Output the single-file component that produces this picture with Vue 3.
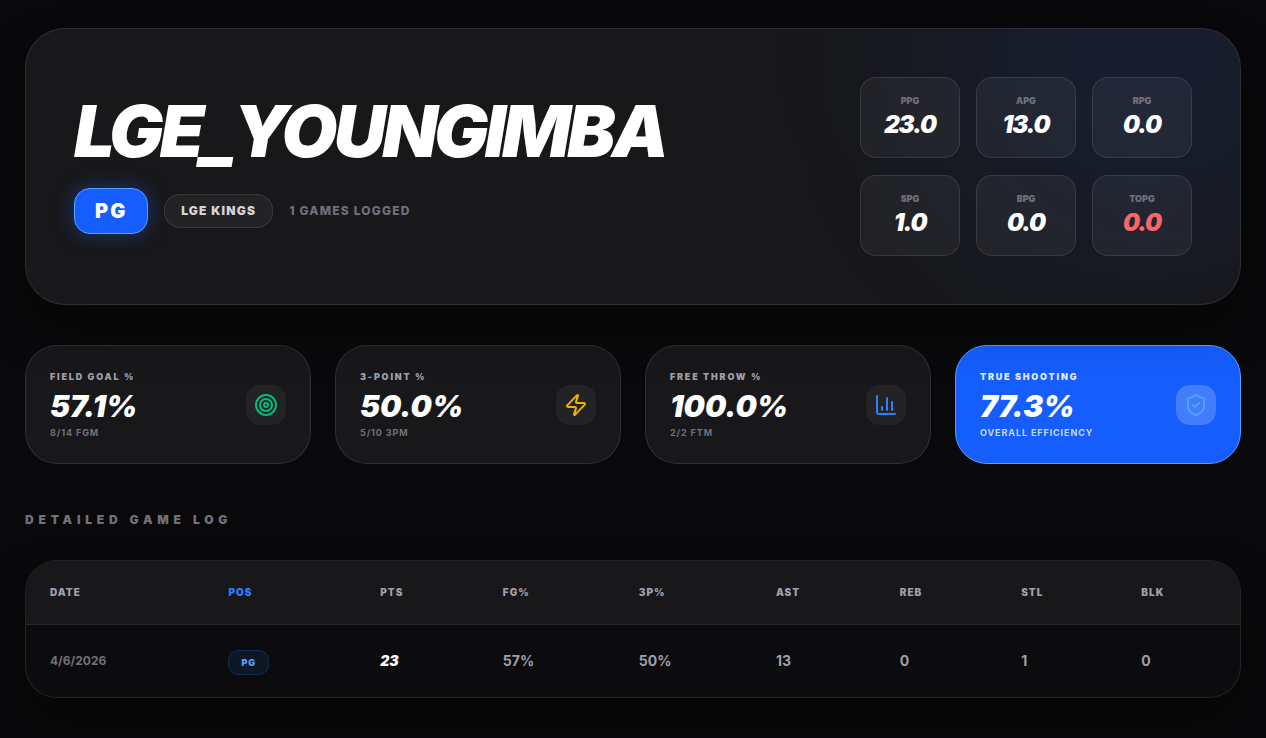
<script setup>
const averages = [
  { label: 'PPG', value: '23.0' },
  { label: 'APG', value: '13.0' },
  { label: 'RPG', value: '0.0' },
  { label: 'SPG', value: '1.0' },
  { label: 'BPG', value: '0.0' },
  { label: 'TOPG', value: '0.0', bad: true },
]

const shooting = [
  { label: 'Field Goal %', value: '57.1%', note: '8/14 FGM', icon: 'target' },
  { label: '3-Point %', value: '50.0%', note: '5/10 3PM', icon: 'zap' },
  { label: 'Free Throw %', value: '100.0%', note: '2/2 FTM', icon: 'chart' },
  { label: 'True Shooting', value: '77.3%', note: 'Overall Efficiency', icon: 'shield', featured: true },
]

const games = [
  { date: '4/6/2026', pos: 'PG', pts: 23, fg: '57%', tp: '50%', ast: 13, reb: 0, stl: 1, blk: 0 },
]
</script>

<template>
  <main class="page">
    <section class="hero">
      <div class="glow" aria-hidden="true"></div>
      <div class="identity">
        <h1>LGE_YOUNGIMBA</h1>
        <div class="tags">
          <span class="position">PG</span>
          <span class="team">LGE Kings</span>
          <span class="logged">1 Games Logged</span>
        </div>
      </div>
      <div class="averages">
        <div v-for="a in averages" :key="a.label" class="average">
          <div class="average-label">{{ a.label }}</div>
          <div class="average-value" :class="{ bad: a.bad }">{{ a.value }}</div>
        </div>
      </div>
    </section>

    <section class="shooting">
      <article v-for="s in shooting" :key="s.label" class="card" :class="{ featured: s.featured }">
        <div>
          <div class="card-label">{{ s.label }}</div>
          <div class="card-value">{{ s.value }}</div>
          <div class="card-note">{{ s.note }}</div>
        </div>
        <div class="icon" :class="s.icon">
          <svg viewBox="0 0 24 24" width="24" height="24" fill="none" stroke="currentColor" stroke-width="2" stroke-linecap="round" stroke-linejoin="round" aria-hidden="true">
            <template v-if="s.icon === 'target'">
              <circle cx="12" cy="12" r="10" />
              <circle cx="12" cy="12" r="6" />
              <circle cx="12" cy="12" r="2" />
            </template>
            <path v-else-if="s.icon === 'zap'" d="M4 14a1 1 0 0 1-.78-1.63l9.9-10.2a.5.5 0 0 1 .86.46l-1.92 6.02A1 1 0 0 0 13 10h7a1 1 0 0 1 .78 1.63l-9.9 10.2a.5.5 0 0 1-.86-.46l1.92-6.02A1 1 0 0 0 11 14z" />
            <template v-else-if="s.icon === 'chart'">
              <path d="M3 3v16a2 2 0 0 0 2 2h16" />
              <path d="M18 17V9" />
              <path d="M13 17V5" />
              <path d="M8 17v-3" />
            </template>
            <template v-else>
              <path d="M20 13c0 5-3.5 7.5-7.66 8.95a1 1 0 0 1-.67-.01C7.5 20.5 4 18 4 13V6a1 1 0 0 1 1-1c2 0 4.5-1.2 6.24-2.72a1.17 1.17 0 0 1 1.52 0C14.51 3.81 17 5 19 5a1 1 0 0 1 1 1z" />
              <path d="m9 12 2 2 4-4" />
            </template>
          </svg>
        </div>
      </article>
    </section>

    <section>
      <h2>Detailed Game Log</h2>
      <div class="log">
        <table>
          <thead>
            <tr>
              <th class="c-date">Date</th>
              <th class="c-pos">Pos</th>
              <th class="c-pts">Pts</th>
              <th class="c-fg">FG%</th>
              <th class="c-tp">3P%</th>
              <th class="c-ast">Ast</th>
              <th class="c-reb">Reb</th>
              <th class="c-stl">Stl</th>
              <th class="c-blk">Blk</th>
            </tr>
          </thead>
          <tbody>
            <tr v-for="g in games" :key="g.date">
              <td class="date">{{ g.date }}</td>
              <td><span class="chip">{{ g.pos }}</span></td>
              <td class="points">{{ g.pts }}</td>
              <td>{{ g.fg }}</td>
              <td>{{ g.tp }}</td>
              <td>{{ g.ast }}</td>
              <td>{{ g.reb }}</td>
              <td>{{ g.stl }}</td>
              <td>{{ g.blk }}</td>
            </tr>
          </tbody>
        </table>
      </div>
    </section>
  </main>
</template>

<style>
body {
  background: #09090b;
}
</style>

<style scoped>
.page {
  box-sizing: border-box;
  min-height: 100vh;
  padding: 28px 25px 40px;
  font-family: Inter, "Liberation Sans", sans-serif;
  color: #fff;
}

.hero {
  position: relative;
  display: flex;
  align-items: center;
  justify-content: space-between;
  gap: 48px;
  padding: 48px;
  border: 1px solid rgba(255, 255, 255, 0.1);
  border-radius: 40px;
  background: #18181b;
  box-shadow: 0 25px 50px -12px rgba(0, 0, 0, 0.5);
  overflow: hidden;
}

.glow {
  position: absolute;
  top: -176px;
  right: -96px;
  width: 384px;
  height: 384px;
  border-radius: 50%;
  background: rgba(21, 93, 252, 0.1);
  filter: blur(96px);
}

.identity,
.averages {
  position: relative;
}

h1 {
  margin: 0 0 26px;
  font-size: 72px;
  line-height: 63px;
  font-weight: 900;
  font-style: italic;
  letter-spacing: -0.05em;
}

.tags {
  display: flex;
  align-items: center;
  gap: 16px;
  text-transform: uppercase;
}

.position {
  padding: 8px 20px;
  border: 1px solid #51a2ff;
  border-radius: 16px;
  background: #155dfc;
  box-shadow: 0 0 20px rgba(37, 99, 235, 0.4);
  font-size: 20px;
  line-height: 28px;
  font-weight: 900;
  letter-spacing: 0.1em;
}

.team {
  padding: 8px 16px;
  border: 1px solid rgba(255, 255, 255, 0.1);
  border-radius: 16px;
  background: rgba(255, 255, 255, 0.05);
  color: #d4d4d8;
  font-size: 12px;
  line-height: 16px;
  font-weight: 900;
  letter-spacing: 0.1em;
}

.logged {
  color: #71717b;
  font-size: 12px;
  line-height: 16px;
  font-weight: 800;
  letter-spacing: 0.1em;
}

.averages {
  display: grid;
  grid-template-columns: repeat(3, 100px);
  gap: 17px 16px;
}

.average {
  padding: 16px 12px;
  border: 1px solid rgba(255, 255, 255, 0.1);
  border-radius: 16px;
  background: rgba(255, 255, 255, 0.05);
  text-align: center;
}

.average-label {
  margin-bottom: 1px;
  color: #71717b;
  font-size: 9px;
  line-height: 14px;
  font-weight: 900;
}

.average-value {
  font-size: 24px;
  line-height: 32px;
  font-weight: 900;
  font-style: italic;
  letter-spacing: -0.05em;
}

.average-value.bad {
  color: #ff6467;
}

.shooting {
  display: grid;
  grid-template-columns: repeat(4, 1fr);
  gap: 24px;
  margin-top: 40px;
}

.card {
  display: flex;
  align-items: center;
  justify-content: space-between;
  padding: 24px;
  border: 1px solid rgba(255, 255, 255, 0.1);
  border-radius: 32px;
  background: #18181b;
}

.card-label {
  margin-bottom: 4px;
  color: #9f9fa9;
  font-size: 9px;
  line-height: 14px;
  font-weight: 900;
  letter-spacing: 0.2em;
  text-transform: uppercase;
}

.card-value {
  margin-bottom: 2px;
  font-size: 30px;
  line-height: 36px;
  font-weight: 900;
  font-style: italic;
}

.card-note {
  color: #71717b;
  font-size: 9px;
  line-height: 13px;
  font-weight: 700;
  letter-spacing: 0.1em;
  text-transform: uppercase;
}

.icon {
  display: grid;
  place-items: center;
  width: 40px;
  height: 40px;
  border-radius: 14px;
  background: rgba(255, 255, 255, 0.05);
}

.target { color: #00bc7d; }
.zap { color: #f0b100; }
.chart { color: #2b7fff; }
.shield { color: #51a2ff; }

.featured {
  border-color: #51a2ff;
  background: #155dfc;
}

.featured .card-label { color: #dbeafe; }
.featured .card-note { color: #bedbff; }
.featured .icon { background: rgba(255, 255, 255, 0.2); }

h2 {
  margin: 48px 0 32px;
  color: #71717b;
  font-size: 12px;
  line-height: 16px;
  font-weight: 900;
  letter-spacing: 0.4em;
  text-transform: uppercase;
}

.log {
  border: 1px solid rgba(255, 255, 255, 0.1);
  border-radius: 32px;
  background: #0c0c0e;
  box-shadow: 0 25px 50px -12px rgba(0, 0, 0, 0.5);
  overflow: hidden;
}

table {
  width: 100%;
  table-layout: fixed;
  border-collapse: collapse;
  text-align: left;
}

.c-date { width: 14.7%; }
.c-pos { width: 12.5%; }
.c-pts { width: 10.1%; }
.c-fg { width: 11.2%; }
.c-tp { width: 11.3%; }
.c-ast { width: 10.2%; }
.c-reb { width: 10%; }
.c-stl { width: 9.9%; }
.c-blk { width: 10.1%; }

th {
  box-sizing: border-box;
  padding: 24px;
  border-bottom: 1px solid #27272a;
  background: #18181b;
  color: #9f9fa9;
  font-size: 10px;
  line-height: 15px;
  font-weight: 900;
  letter-spacing: 0.1em;
  text-transform: uppercase;
}

th.c-pos {
  color: #2b7fff;
}

td {
  padding: 24px;
  color: #9f9fa9;
  font-size: 14px;
  line-height: 24px;
  font-weight: 700;
}

td.date {
  color: #71717b;
  font-size: 12px;
}

td.points {
  color: #fff;
  font-weight: 900;
  font-style: italic;
}

.chip {
  padding: 6px 12px;
  border: 1px solid rgba(43, 127, 255, 0.2);
  border-radius: 10px;
  background: rgba(43, 127, 255, 0.1);
  color: #51a2ff;
  font-size: 9px;
  line-height: 13px;
  font-weight: 900;
  letter-spacing: 0.1em;
}
</style>
